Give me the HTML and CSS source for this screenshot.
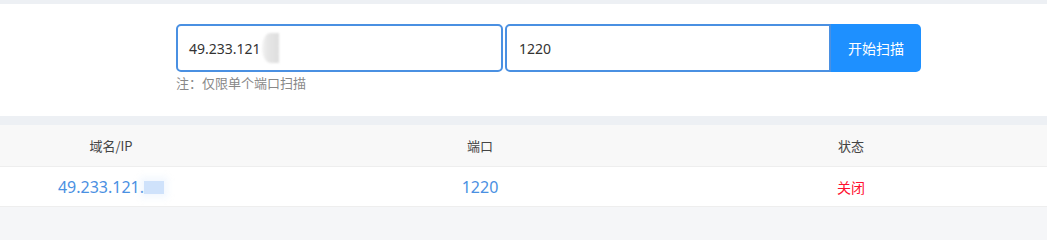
FILE: index.html
```html
<!DOCTYPE html>
<html lang="zh">
<head>
<meta charset="utf-8">
<title>端口扫描</title>
<link rel="stylesheet" href="styles.css">
</head>
<body>
<div class="page">
  <section class="card scan">
    <div class="form-row">
      <div class="field field-host"><span class="val">49.233.121</span><span class="blur-a"></span></div>
      <div class="field field-port"><span class="val">1220</span></div>
      <button class="btn" type="button">开始扫描</button>
    </div>
    <div class="note">注：仅限单个端口扫描</div>
  </section>
  <section class="table">
    <div class="tr thead">
      <div class="td">域名/IP</div>
      <div class="td">端口</div>
      <div class="td">状态</div>
      <div class="td"></div>
    </div>
    <div class="tr tbody">
      <div class="td link">49.233.121.<span class="blur-b"></span></div>
      <div class="td link">1220</div>
      <div class="td closed">关闭</div>
      <div class="td"></div>
    </div>
  </section>
</div>
</body>
</html>
```
FILE: styles.css
```css
* { box-sizing: border-box; }
html, body { margin: 0; padding: 0; }
html { background: #f5f6f8; }
body {
  background: #f5f6f8;
  font-family: "Noto Sans", "Noto Sans CJK SC", sans-serif;
  color: #333;
  width: 1047px;
  height: 217px;
  overflow: hidden;
}
.page {
  border-top: 4px solid #edf0f4;
}
.card.scan {
  background: #fff;
  height: 112px;
  padding: 20px 0 0 176px;
}
.form-row {
  display: flex;
  height: 48px;
}
.field {
  display: flex;
  align-items: center;
  height: 48px;
  border: 2px solid #4a90e2;
  font-size: 14px;
  color: #333;
  background: #fff;
}
.field-host {
  width: 327px;
  border-radius: 5px;
  padding-left: 11px;
}
.field-port {
  width: 326px;
  margin-left: 2px;
  border-radius: 5px 0 0 5px;
  padding-left: 12px;
}
.blur-a {
  display: inline-block;
  width: 17px;
  height: 30px;
  margin-left: 1px;
  background: linear-gradient(90deg, #f3f3f3 0%, #e6e6e6 35%, #dedede 100%);
  border-radius: 50% 0 0 50% / 50% 0 0 50%;
  filter: blur(1px);
}
.btn {
  width: 90px;
  height: 48px;
  border: 0;
  background: #1e90ff;
  color: #fff;
  font-family: "Noto Sans CJK SC", sans-serif;
  font-size: 14px;
  border-radius: 0 5px 5px 0;
  padding: 0;
}
.note {
  margin-top: 2px;
  font-size: 13px;
  line-height: 18px;
  color: #888;
  font-family: "Noto Sans CJK SC", sans-serif;
}
.table {
  border-top: 9px solid #edf0f4;
}
.tr {
  display: grid;
  grid-template-columns: 222px 516px 226px 1fr;
  align-items: center;
  border-bottom: 1px solid #eeeeee;
}
.thead {
  background: #f8f8f8;
  height: 42px;
  font-size: 13px;
  color: #444;
  font-family: "Noto Sans CJK SC", sans-serif;
}
.tbody {
  background: #fff;
  height: 40px;
  font-size: 16px;
}
.td {
  text-align: center;
}
.link { color: #4a90e2; }
.closed {
  color: #ff1030;
  font-size: 14px;
  font-family: "Noto Sans CJK SC", sans-serif;
}
.blur-b {
  display: inline-block;
  width: 20px;
  height: 13px;
  vertical-align: -1px;
  background: #cfe2fb;
  box-shadow: 0 0 6px 4px rgba(207, 226, 251, 0.25);
}
```
